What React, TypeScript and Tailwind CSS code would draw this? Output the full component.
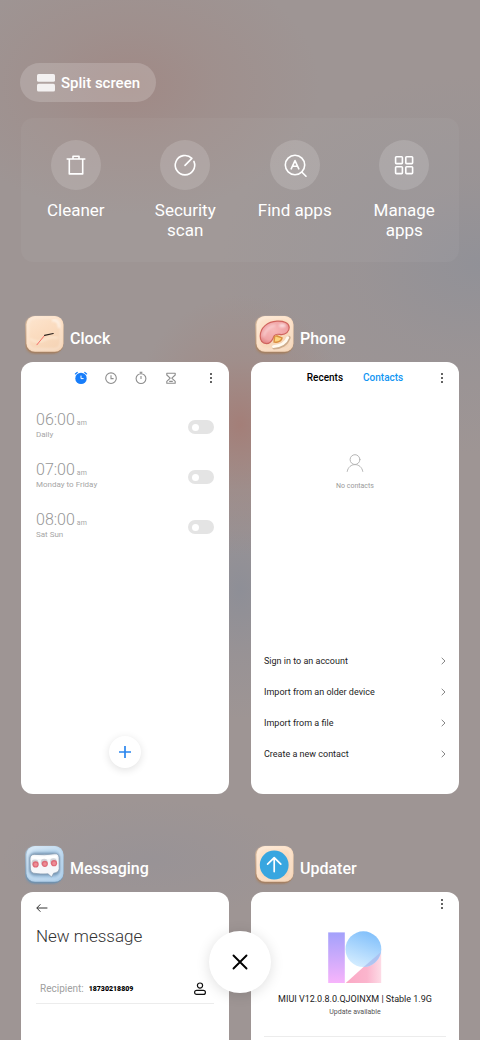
import type { ReactNode } from "react";

function MoreIcon() {
  return (
    <svg viewBox="0 0 12 12" className="size-3" fill="#222" aria-hidden="true">
      <circle cx="6" cy="2" r="0.95" />
      <circle cx="6" cy="6" r="0.95" />
      <circle cx="6" cy="10" r="0.95" />
    </svg>
  );
}

function TrashIcon() {
  return (
    <svg viewBox="0 0 24 24" className="size-6" fill="none" stroke="#fff" strokeWidth="1.6" strokeLinejoin="round" strokeLinecap="round">
      <path d="M3.2 6H20.8M9 5.6V3.2H15V5.6M5.3 6.2V20.9H18.7V6.2" />
    </svg>
  );
}

function ScanIcon() {
  return (
    <svg viewBox="0 0 24 24" className="size-6" fill="none" stroke="#fff" strokeWidth="1.6" strokeLinecap="round" strokeLinejoin="round">
      <path d="M12 12.4L18.9 5.4A9.7 9.7 0 1 0 20.9 8.4" />
    </svg>
  );
}

function FindIcon() {
  return (
    <svg viewBox="0 0 24 24" className="size-6" fill="none" stroke="#fff" strokeWidth="1.6" strokeLinecap="round" strokeLinejoin="round">
      <circle cx="12" cy="12" r="9.7" />
      <path d="M19 19.2L23 23.2M8.2 15.8L12 7.6L15.8 15.8M9.8 13.2H14.2" />
    </svg>
  );
}

function GridIcon() {
  return (
    <svg viewBox="0 0 24 24" className="size-6" fill="none" stroke="#fff" strokeWidth="1.6">
      <rect x="3.6" y="3.8" width="6.8" height="6.8" rx="0.8" />
      <rect x="13.8" y="3.8" width="6.8" height="6.8" rx="0.8" />
      <rect x="3.6" y="13.8" width="6.8" height="6.8" rx="0.8" />
      <rect x="13.8" y="13.8" width="6.8" height="6.8" rx="0.8" />
    </svg>
  );
}

function TileDefs({ id, blue }: { id: string; blue?: boolean }) {
  return (
    <defs>
      <linearGradient id={id + "face"} x1="0" y1="0" x2="0.6" y2="1">
        <stop offset="0" stopColor={blue ? "#d3e6f6" : "#fde6d0"} />
        <stop offset="0.5" stopColor={blue ? "#b5d3ec" : "#fbdcc0"} />
        <stop offset="1" stopColor={blue ? "#a9cbe8" : "#f5d4b6"} />
      </linearGradient>
      <linearGradient id={id + "edge"} x1="0" y1="0" x2="0" y2="1">
        <stop offset="0" stopColor={blue ? "#a9c3d8" : "#dcbd9f"} />
        <stop offset="1" stopColor={blue ? "#6f8fab" : "#a17e62"} />
      </linearGradient>
      <filter id={id + "soft"} x="-20%" y="-20%" width="140%" height="140%">
        <feGaussianBlur stdDeviation="0.9" />
      </filter>
    </defs>
  );
}

function Tile({ id, blue, children }: { id: string; blue?: boolean; children: ReactNode }) {
  return (
    <svg viewBox="1 0 40 40" className="size-10" aria-hidden="true">
      <TileDefs id={id} blue={blue} />
      <rect x="1" y="2" width="37" height="37" rx="9" fill={`url(#${id}edge)`} filter={`url(#${id}soft)`} opacity="0.75" />
      <rect x="1.4" y="1.2" width="38" height="37" rx="9" fill={`url(#${id}edge)`} />
      <rect x="2.4" y="1" width="37" height="35.8" rx="8.6" fill={`url(#${id}face)`} />
      <rect x="4" y="2.6" width="33" height="31.8" rx="7.4" fill="none" stroke="#fff" strokeOpacity="0.35" strokeWidth="1.6" filter={`url(#${id}soft)`} />
      {children}
    </svg>
  );
}

function ClockTile() {
  return (
    <Tile id="clk">
      <path d="M29 5.4Q35 5 35 12" fill="none" stroke="#fff" strokeOpacity="0.7" strokeWidth="2.2" strokeLinecap="round" filter="url(#clksoft)" />
      <path d="M6 24Q14 29 20 25T34 23" fill="none" stroke="#fff1de" strokeOpacity="0.7" strokeWidth="1.6" filter="url(#clksoft)" />
      <path d="M20.6 20.4L12.9 29.8" stroke="#f2625e" strokeWidth="0.9" strokeLinecap="round" />
      <path d="M20.6 20.4L29.2 18.5" stroke="#2b211c" strokeWidth="1.2" strokeLinecap="round" />
    </Tile>
  );
}

function PhoneTile() {
  return (
    <Tile id="phn">
      <defs>
        <radialGradient id="pink" cx="0.45" cy="0.4" r="0.7">
          <stop offset="0" stopColor="#f7b9ba" />
          <stop offset="0.65" stopColor="#f0a5a7" />
          <stop offset="1" stopColor="#dc7b79" />
        </radialGradient>
      </defs>
      <path d="M12.5 28.6C8 28.6 6.2 25.4 6.2 21C6.4 12.6 13.4 6.6 23 6.2C30 5.8 35 8.2 35.2 12.4C35.4 16.6 31.6 19.8 27.2 19.6C24.6 19.4 22 18.4 20.4 20.6C18.4 23.6 18 28.6 12.5 28.6Z" fill="url(#pink)" stroke="#d0645e" strokeWidth="1.2" />
      <path d="M10 20.4C11 15.6 15.6 11.6 20.4 10.6" fill="none" stroke="#fff" strokeOpacity="0.35" strokeWidth="2.4" strokeLinecap="round" filter="url(#phnsoft)" />
      <ellipse cx="28.4" cy="10.6" rx="3.4" ry="1.8" fill="#fff" opacity="0.6" filter="url(#phnsoft)" />
      <path d="M19.6 21.2L23 20L28.8 22.4C28.4 26 25 28.6 19.4 27.8Z" fill="#dc9142" />
      <path d="M21.4 21.6L27.2 23.2C26 25.6 23.6 26.8 20.8 26.4Z" fill="#fbd480" />
      <path d="M20 32.8C27 32.6 33 29 35 22.6" fill="none" stroke="#a6815f" strokeWidth="3.4" strokeLinecap="round" opacity="0.5" />
      <path d="M19.4 31.6C26 31.2 31.8 28 33.8 22.6" fill="none" stroke="#fffaf0" strokeWidth="2.8" strokeLinecap="round" />
    </Tile>
  );
}

function MessagingTile() {
  return (
    <Tile id="msg" blue>
      <rect x="5" y="7.6" width="31" height="23" rx="6" fill="#6787a5" opacity="0.75" filter="url(#msgsoft)" />
      <path d="M10.5 9.4Q20 10.4 31 8.8Q34.8 8.6 35 12.6L35.2 23.6Q35.2 27.2 31.4 27.8L29.6 28.2L27.6 32L24 28.8Q16 29.4 9.6 28.2Q6.6 27.6 6.4 24L6 14Q6 9.4 10.5 9.4Z" fill="#f5f7fa" stroke="#8499af" strokeWidth="0.7" />
      <path d="M9 12.4Q20 13.4 32 11.6" fill="none" stroke="#fff" strokeWidth="2.4" strokeLinecap="round" />
      {[11.6, 20.8, 30].map((x, i) => (
        <g key={x}>
          <circle cx={x - 0.6} cy={17.8 - i * 0.6} r="3.4" fill="#c9c8ce" opacity="0.8" />
          <circle cx={x} cy={19.4 - i * 0.6} r="3.1" fill="#de6b78" />
          <circle cx={x + 0.1} cy={19.6 - i * 0.6} r="1.8" fill="#ee8c95" />
        </g>
      ))}
    </Tile>
  );
}

function UpdaterTile() {
  return (
    <Tile id="upd">
      <circle cx="20.2" cy="20" r="14.4" fill="#38a6e0" />
      <path d="M20.2 26.6V13.2M13.6 19.2L20.2 12.6L26.8 19.2" fill="none" stroke="#fff" strokeWidth="1.7" strokeLinecap="round" strokeLinejoin="round" />
    </Tile>
  );
}

const tools = [
  { label: "Cleaner", icon: <TrashIcon /> },
  { label: "Security scan", icon: <ScanIcon /> },
  { label: "Find apps", icon: <FindIcon /> },
  { label: "Manage apps", icon: <GridIcon /> },
];

const alarms = [
  { time: "06:00", days: "Daily" },
  { time: "07:00", days: "Monday to Friday" },
  { time: "08:00", days: "Sat Sun" },
];

const contactActions = [
  "Sign in to an account",
  "Import from an older device",
  "Import from a file",
  "Create a new contact",
];

function RecentApp({ title, icon, children }: { title: string; icon: ReactNode; children: ReactNode }) {
  return (
    <section>
      <header className="flex h-12 items-start gap-[5px] pl-1 pt-px">
        {icon}
        <h2 className="pt-[14px] text-[16px] leading-5 font-medium text-white">{title}</h2>
      </header>
      <div className="flex aspect-[208/432] flex-col overflow-hidden rounded-xl bg-white">{children}</div>
    </section>
  );
}

function ClockScreen() {
  return (
    <>
      <nav className="flex h-8 shrink-0 items-center justify-end pr-3" aria-label="Clock sections">
        <div className="flex gap-[14px] pr-[26px]">
          <button aria-label="Alarm" className="size-4">
            <svg viewBox="0 0 16 16" className="size-4">
              <circle cx="8" cy="8.4" r="5.7" fill="#177dfa" />
              <path d="M2.4 3.9L4.2 2.5M13.6 3.9L11.8 2.5" stroke="#177dfa" strokeWidth="1.3" strokeLinecap="round" />
              <path d="M8 5.6V8.6H10.6" fill="none" stroke="#fff" strokeWidth="1" />
            </svg>
          </button>
          <button aria-label="World clock" className="size-4">
            <svg viewBox="0 0 16 16" className="size-4" fill="none" stroke="#8d8d8d" strokeWidth="1.1">
              <circle cx="8" cy="8.2" r="5.3" />
              <path d="M8 5.2V8.6H10.6" />
            </svg>
          </button>
          <button aria-label="Stopwatch" className="size-4">
            <svg viewBox="0 0 16 16" className="size-4" fill="none" stroke="#8d8d8d" strokeWidth="1.1">
              <circle cx="8" cy="8.6" r="4.9" />
              <path d="M8 6V9M6.6 2.3H9.4M8 2.3V3.7" />
            </svg>
          </button>
          <button aria-label="Timer" className="size-4">
            <svg viewBox="0 0 16 16" className="size-4" fill="none" stroke="#8d8d8d" strokeWidth="1.1" strokeLinejoin="round">
              <path d="M3.8 3.2H12.2V5L8.8 8.2L12.2 11.4V13.2H3.8V11.4L7.2 8.2L3.8 5Z" />
              <path d="M6.2 11.4H9.8" />
            </svg>
          </button>
        </div>
        <button aria-label="Clock options"><MoreIcon /></button>
      </nav>
      <ul className="mt-2 px-[15px]">
        {alarms.map((a) => (
          <li key={a.time}>
            <label className="flex h-[50px] items-center justify-between">
              <span className="flex flex-col pb-px text-[#a6a6a6]">
                <span className="text-[16px] leading-[14px] font-light text-[#979797]">
                  {a.time}
                  <span className="pl-0.5 text-[7px] font-normal text-[#a6a6a6]">am</span>
                </span>
                <span className="text-[8px] leading-[10px]">{a.days}</span>
              </span>
              <input
                type="checkbox"
                role="switch"
                className="flex h-[14px] w-[26px] appearance-none items-center rounded-full bg-[#e4e4e4] px-1 before:size-[7px] before:rounded-full before:bg-white checked:justify-end checked:bg-[#177dfa]"
              />
            </label>
          </li>
        ))}
      </ul>
      <button aria-label="Add alarm" className="mt-auto mb-[26px] flex size-8 items-center justify-center self-center rounded-full bg-white shadow-[0_2px_9px_rgba(0,0,0,0.12)]">
        <svg viewBox="0 0 14 14" className="size-[14px]" stroke="#2b86ee" strokeWidth="1.7">
          <path d="M1 7H13M7 1V13" />
        </svg>
      </button>
    </>
  );
}

function PhoneScreen() {
  return (
    <>
      <nav className="grid h-8 shrink-0 grid-cols-[1fr_auto_1fr] items-center pr-[11px] pl-[11px]" aria-label="Phone sections">
        <span />
        <div className="flex gap-5 text-[10px] leading-4 font-medium">
          <button className="text-black">Recents</button>
          <button className="text-[#1296f3]">Contacts</button>
        </div>
        <button aria-label="Phone options" className="justify-self-end"><MoreIcon /></button>
      </nav>
      <div className="mt-[59px] flex flex-col items-center gap-2">
        <svg viewBox="0 0 20 20" className="size-5" fill="none" stroke="#b5b5b5" strokeWidth="1" strokeLinecap="round" aria-hidden="true">
          <circle cx="10" cy="6.6" r="4.9" />
          <path d="M2.2 18.4C3 14 6.4 11.6 10 11.6S17 14 17.8 18.4" />
        </svg>
        <p className="text-[7px] leading-[10px] text-[#9a9a9a]">No contacts</p>
      </div>
      <ul className="mt-auto pb-[25px]">
        {contactActions.map((text) => (
          <li key={text}>
            <button className="flex h-[31px] w-full items-center justify-between px-[13px] text-[9px] leading-3 text-[#1d1d1d]">
              {text}
              <svg viewBox="0 0 5 8" className="h-2 w-[5px]" fill="none" stroke="#777" strokeWidth="0.9" aria-hidden="true">
                <path d="M0.7 0.8L4 4L0.7 7.2" />
              </svg>
            </button>
          </li>
        ))}
      </ul>
    </>
  );
}

function MessagingScreen() {
  return (
    <div className="flex flex-col px-[15px] pt-[10px]">
      <button aria-label="Back" className="self-start">
        <svg viewBox="0 0 12 12" className="size-3" fill="none" stroke="#333" strokeWidth="1">
          <path d="M11.4 6H0.8M4.4 2.3L0.8 6L4.4 9.7" />
        </svg>
      </button>
      <h3 className="mt-[10px] text-[17px] leading-6 font-light text-[#333]">New message</h3>
      <div className="mt-6 flex h-8 items-center border-b border-[#ececec] pt-0.5 pr-[7px] pl-1">
        <label htmlFor="recipient" className="text-[10px] leading-4 text-[#a0a0a0]">Recipient:</label>
        <input id="recipient" defaultValue="18730218809" className="ml-[5px] min-w-0 flex-1 text-[7px] leading-4 font-black text-black outline-none" />
        <button aria-label="Choose contact">
          <svg viewBox="0 0 14 14" className="size-[14px]" fill="none" stroke="#111" strokeWidth="1.2">
            <circle cx="7" cy="3.6" r="2.6" />
            <rect x="1.6" y="8.4" width="10.8" height="4" rx="2" />
          </svg>
        </button>
      </div>
    </div>
  );
}

function UpdaterScreen() {
  return (
    <div className="flex flex-col px-[13px] pt-[6px]">
      <button aria-label="Updater options" className="-mr-0.5 self-end"><MoreIcon /></button>
      <svg viewBox="0 0 54 53" className="mt-[21px] h-[53px] w-[54px] self-center" role="img" aria-label="MIUI 12">
        <defs>
          <linearGradient id="bar" x1="0" y1="0" x2="0" y2="1">
            <stop offset="0" stopColor="#a3a1fb" />
            <stop offset="1" stopColor="#f7b4fb" />
          </linearGradient>
          <linearGradient id="ball" x1="0.7" y1="0" x2="0.35" y2="1">
            <stop offset="0" stopColor="#80bffb" />
            <stop offset="1" stopColor="#d5edff" />
          </linearGradient>
          <linearGradient id="wedge" x1="0" y1="0" x2="1" y2="0">
            <stop offset="0" stopColor="#fba9c5" />
            <stop offset="0.6" stopColor="#fbb5cd" />
            <stop offset="1" stopColor="#fddbe6" />
          </linearGradient>
        </defs>
        <rect x="0.2" y="1.4" width="16.6" height="50.6" fill="url(#bar)" />
        <path d="M17.8 52L53.2 20V52Z" fill="url(#wedge)" />
        <circle cx="35.4" cy="18.2" r="17.9" fill="url(#ball)" />
        <path d="M35.6 36.1L52.6 21.2A17.9 17.9 0 0 1 35.6 36.1Z" fill="#aab9ec" opacity="0.75" />
      </svg>
      <p className="mt-[9px] text-center text-[9px] leading-3 whitespace-nowrap text-[#222]">MIUI V12.0.8.0.QJOINXM | Stable 1.9G</p>
      <p className="mt-px text-center text-[7px] leading-3 text-[#555]">Update available</p>
      <hr className="mt-[18px] border-[#ececec]" />
    </div>
  );
}

export default function App() {
  return (
    <main className="relative h-screen overflow-hidden bg-[#9e9594] bg-[radial-gradient(ellipse_190px_130px_at_130px_85px,rgba(161,132,127,0.7),rgba(161,136,131,0.4)_45%,transparent),radial-gradient(ellipse_110px_130px_at_50%_425px,rgba(164,124,117,0.9),rgba(162,134,128,0.45)_50%,transparent),radial-gradient(ellipse_260px_190px_at_100%_265px,rgba(142,144,152,0.8),rgba(148,146,151,0.45)_45%,transparent),radial-gradient(ellipse_90px_130px_at_50%_590px,rgba(140,142,151,0.9),rgba(146,144,150,0.5)_50%,transparent),radial-gradient(ellipse_150px_60px_at_150px_860px,rgba(150,146,151,0.7),transparent)] font-['Roboto',sans-serif]">
      <div className="px-[21px] pt-[63px]">
        <button className="-ml-px flex h-[39px] items-center gap-[6px] rounded-full bg-white/18 pr-4 pl-[17px] text-[15px] leading-5 font-medium text-white">
          <svg viewBox="0 0 18 18" className="size-[18px]" fill="#fff" fillOpacity="0.85" aria-hidden="true">
            <rect x="0" y="0" width="18" height="7.8" rx="1.6" />
            <rect x="0" y="9.8" width="18" height="7.8" rx="1.6" />
          </svg>
          Split screen
        </button>

        <div className="mt-4 grid h-36 grid-cols-4 rounded-xl bg-white/4 pt-[22px]">
          {tools.map((t) => (
            <button key={t.label} className="flex flex-col items-center gap-[10px] text-white">
              <span className="flex size-[50px] items-center justify-center rounded-full bg-white/15">{t.icon}</span>
              <span className="w-20 text-[17px] leading-5">{t.label}</span>
            </button>
          ))}
        </div>

        <div className="mt-[52px] grid grid-cols-2 gap-x-[22px] gap-y-[50px]">
          <RecentApp title="Clock" icon={<ClockTile />}><ClockScreen /></RecentApp>
          <RecentApp title="Phone" icon={<PhoneTile />}><PhoneScreen /></RecentApp>
          <RecentApp title="Messaging" icon={<MessagingTile />}><MessagingScreen /></RecentApp>
          <RecentApp title="Updater" icon={<UpdaterTile />}><UpdaterScreen /></RecentApp>
        </div>
      </div>

      <button aria-label="Close all apps" className="absolute bottom-[47px] left-1/2 flex size-[62px] -translate-x-1/2 items-center justify-center rounded-full bg-white shadow-[0_2px_14px_rgba(0,0,0,0.13)]">
        <svg viewBox="0 0 16 16" className="size-4" stroke="#000" strokeWidth="1.9" strokeLinecap="round">
          <path d="M1.5 1.5L14.5 14.5M14.5 1.5L1.5 14.5" />
        </svg>
      </button>
    </main>
  );
}
